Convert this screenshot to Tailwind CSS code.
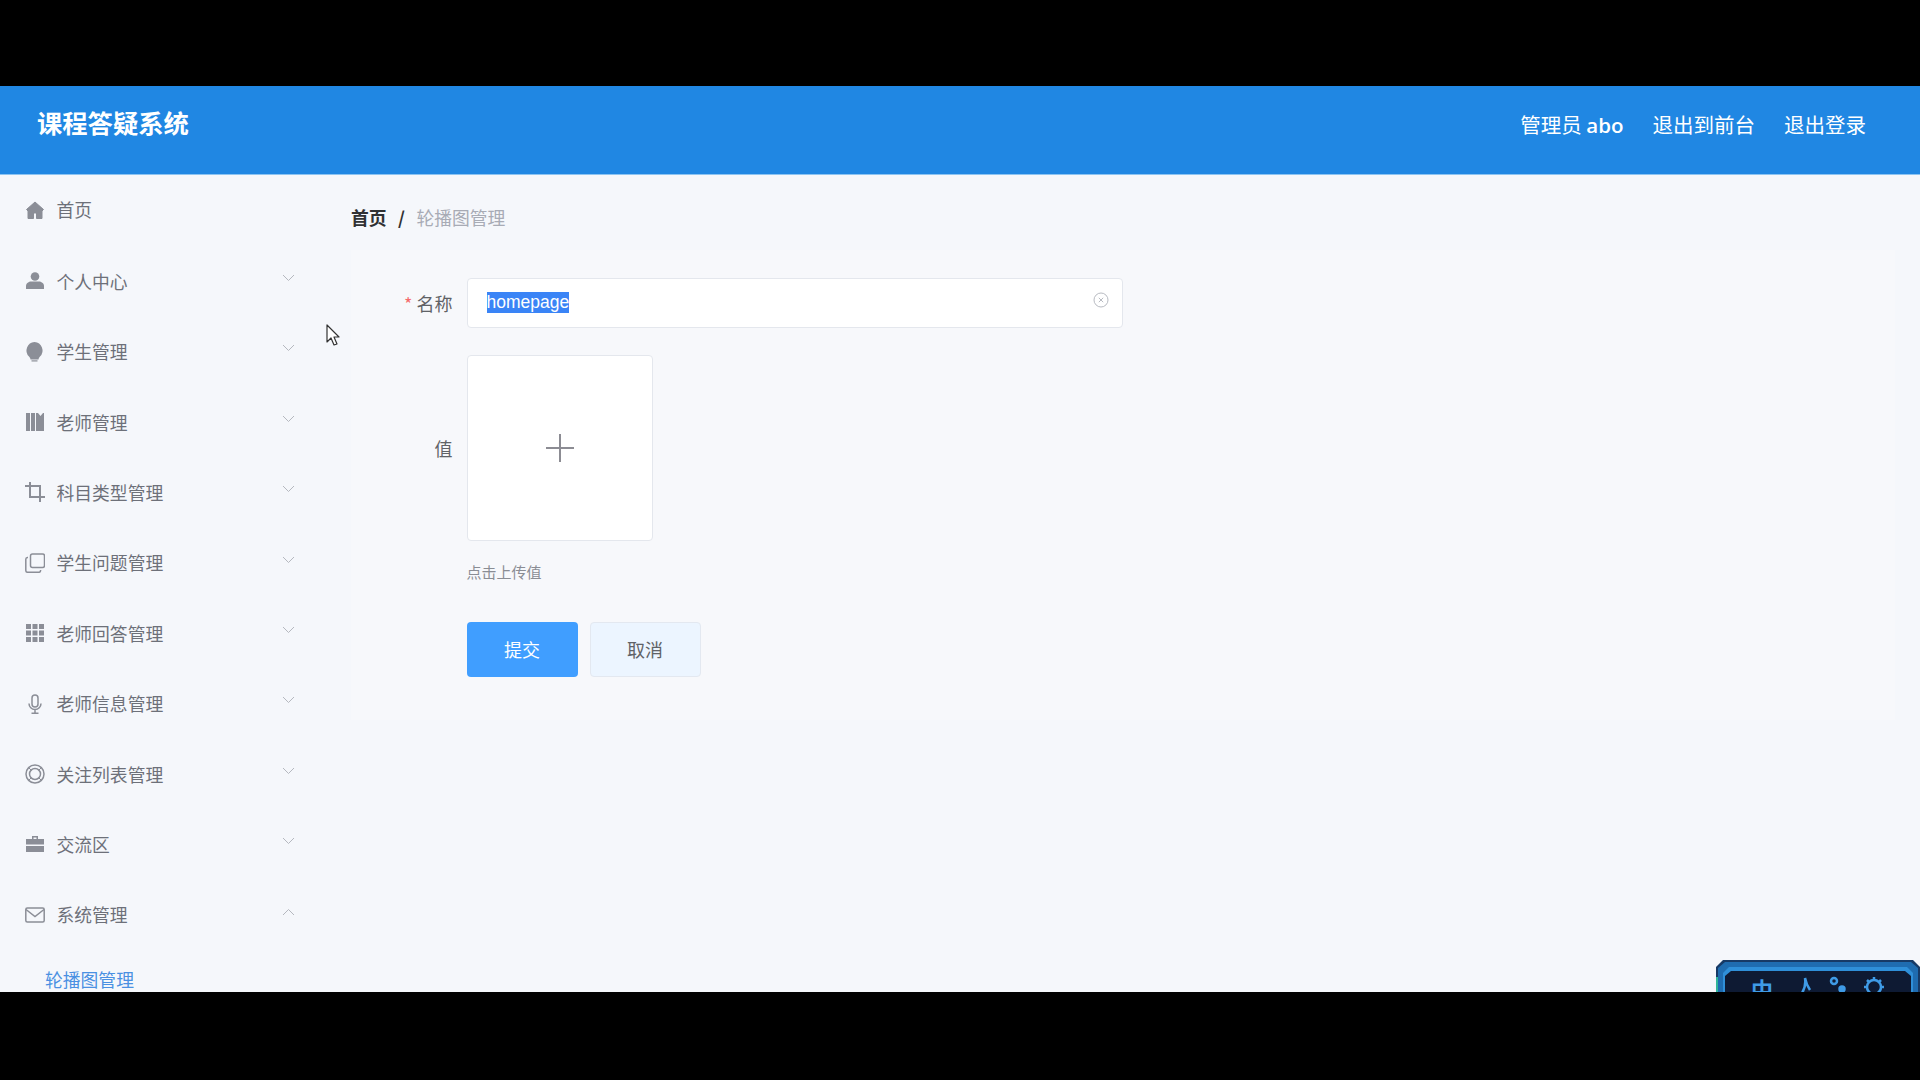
<!DOCTYPE html>
<html lang="zh"><head><meta charset="utf-8"><title>课程答疑系统</title>
<script src="https://cdn.jsdelivr.net/npm/@tailwindcss/browser@4"></script></head>
<body class="bg-black font-['Noto_Sans_CJK_SC','Noto_Sans',sans-serif]">
<div class="h-[1080px] w-[1920px] flex flex-col overflow-hidden">
<div class="h-[86px] shrink-0 bg-black"></div>
<div class="h-[906px] shrink-0 relative overflow-hidden bg-[#f5f7fb] flex flex-col">
  <header class="h-[89px] shrink-0 bg-[#2087e3] border-b border-[#8cc4f2] flex items-center justify-between pl-[37px] pr-[54px] text-white">
    <div class="text-[25.300px] font-bold leading-none -translate-y-[7px]">课程答疑系统</div>
    <div class="flex gap-[29px] text-[20.500px] leading-none -translate-y-[5px]"><span>管理员 <span class="font-['Open_Sans',sans-serif] font-semibold">abo</span></span><span>退出到前台</span><span>退出登录</span></div>
  </header>
  <div class="flex flex-1 min-h-0">
    <aside class="w-[320px] shrink-0 text-[17.800px] text-[#6d7079] overflow-hidden">
      <div class="h-[71px] flex items-center pl-[25px] gap-[11.500px] pb-[2px]">
        <svg class="w-5 h-5 text-[#8b8e97]" viewBox="0 0 20 20" fill="currentColor"><path d="M10 2 1.500 9.500 3 11v7.500h5.500V13h3v5.500H17V11l1.500-1.500z" stroke="currentColor" stroke-linejoin="round"/></svg><span>首页</span></div>
      <div class="h-[70.4px] flex items-center pl-[25px] gap-[11.500px] relative">
        <svg class="w-5 h-5 text-[#8b8e97]" viewBox="0 0 20 20" fill="currentColor"><circle cx="10" cy="5.500" r="4.300"/><path d="M1 18v-3c0-3 3-4.500 5-4.500h8c2 0 5 1.500 5 4.500v3z"/></svg><span>个人中心</span>
        <svg class="absolute left-[282px] top-[28px] w-[13px] h-[8px] text-[#b5b8bf]" viewBox="0 0 13 8" fill="none" stroke="currentColor"><path d="m1 1 5.500 5.500L12 1"/></svg></div>
      <div class="h-[70.4px] flex items-center pl-[25px] gap-[11.500px] relative">
        <svg class="w-5 h-5 text-[#8b8e97]" viewBox="0 0 20 20" fill="currentColor"><path d="M9.500 0a8.500 8.500 0 0 0-5.500 14.500c1 1 1.500 2 1.500 3h8c0-1 .5-2 1.500-3A8.500 8.500 0 0 0 9.500 0z"/><path d="M6.500 18.300h6v1.200h-6z"/></svg><span>学生管理</span>
        <svg class="absolute left-[282px] top-[28px] w-[13px] h-[8px] text-[#b5b8bf]" viewBox="0 0 13 8" fill="none" stroke="currentColor"><path d="m1 1 5.500 5.500L12 1"/></svg></div>
      <div class="h-[70.4px] flex items-center pl-[25px] gap-[11.500px] relative">
        <svg class="w-5 h-5 text-[#8b8e97]" viewBox="0 0 20 20" fill="currentColor"><path d="M1 1h4v18H1zM6 1h4v18H6zM11 1h2l2.500 3L18 1h1v18h-8z"/></svg><span>老师管理</span>
        <svg class="absolute left-[282px] top-[28px] w-[13px] h-[8px] text-[#b5b8bf]" viewBox="0 0 13 8" fill="none" stroke="currentColor"><path d="m1 1 5.500 5.500L12 1"/></svg></div>
      <div class="h-[70.4px] flex items-center pl-[25px] gap-[11.500px] relative">
        <svg class="w-5 h-5 text-[#8b8e97]" viewBox="0 0 20 20" fill="none" stroke="currentColor" stroke-width="2"><path d="M5 0v15h15M0 4h15v16"/></svg><span>科目类型管理</span>
        <svg class="absolute left-[282px] top-[28px] w-[13px] h-[8px] text-[#b5b8bf]" viewBox="0 0 13 8" fill="none" stroke="currentColor"><path d="m1 1 5.500 5.500L12 1"/></svg></div>
      <div class="h-[70.4px] flex items-center pl-[25px] gap-[11.500px] relative">
        <svg class="w-5 h-5 text-[#8b8e97]" viewBox="0 0 20 20" fill="none" stroke="currentColor" stroke-width="1.500"><rect x="5.500" y="1" width="14" height="13.500" rx="2"/><path d="M3 4.500h-.5A1.800 1.800 0 0 0 .8 6.300v11.200c0 1 .8 1.800 1.800 1.800h11.200c1 0 1.800-.8 1.800-1.800V17"/></svg><span>学生问题管理</span>
        <svg class="absolute left-[282px] top-[28px] w-[13px] h-[8px] text-[#b5b8bf]" viewBox="0 0 13 8" fill="none" stroke="currentColor"><path d="m1 1 5.500 5.500L12 1"/></svg></div>
      <div class="h-[70.4px] flex items-center pl-[25px] gap-[11.500px] relative">
        <svg class="w-5 h-5 text-[#8b8e97]" viewBox="0 0 20 20" fill="currentColor"><path d="M1 1h5v5H1zM7.500 1h5v5h-5zM14 1h5v5h-5zM1 7.500h5v5H1zM7.500 7.500h5v5h-5zM14 7.500h5v5h-5zM1 14h5v5H1zM7.500 14h5v5h-5zM14 14h5v5h-5z"/></svg><span>老师回答管理</span>
        <svg class="absolute left-[282px] top-[28px] w-[13px] h-[8px] text-[#b5b8bf]" viewBox="0 0 13 8" fill="none" stroke="currentColor"><path d="m1 1 5.500 5.500L12 1"/></svg></div>
      <div class="h-[70.4px] flex items-center pl-[25px] gap-[11.500px] relative">
        <svg class="w-5 h-5 text-[#8b8e97]" viewBox="0 0 20 20" fill="none" stroke="currentColor" stroke-width="1.500"><rect x="7" y="1" width="6" height="12" rx="3"/><path d="M4 9.500a6 6 0 0 0 12 0M10 15.500V19M6.500 19.200h7"/></svg><span>老师信息管理</span>
        <svg class="absolute left-[282px] top-[28px] w-[13px] h-[8px] text-[#b5b8bf]" viewBox="0 0 13 8" fill="none" stroke="currentColor"><path d="m1 1 5.500 5.500L12 1"/></svg></div>
      <div class="h-[70.4px] flex items-center pl-[25px] gap-[11.500px] relative">
        <svg class="w-5 h-5 text-[#8b8e97]" viewBox="0 0 20 20" fill="none" stroke="currentColor" stroke-width="1.500"><circle cx="10" cy="10" r="9"/><circle cx="10" cy="10" r="5.500"/><path d="M3.500 3.500l3 3M16.500 3.500l-3 3M3.500 16.500l3-3M16.500 16.500l-3-3" stroke-width="1"/></svg><span>关注列表管理</span>
        <svg class="absolute left-[282px] top-[28px] w-[13px] h-[8px] text-[#b5b8bf]" viewBox="0 0 13 8" fill="none" stroke="currentColor"><path d="m1 1 5.500 5.500L12 1"/></svg></div>
      <div class="h-[70.4px] flex items-center pl-[25px] gap-[11.500px] relative">
        <svg class="w-5 h-5 text-[#8b8e97]" viewBox="0 0 20 20" fill="currentColor"><path d="M7 2h6v3h-1.500V3.500h-3V5H7zM1 5h18v5.500H1zM1 12h18v6H1z"/></svg><span>交流区</span>
        <svg class="absolute left-[282px] top-[28px] w-[13px] h-[8px] text-[#b5b8bf]" viewBox="0 0 13 8" fill="none" stroke="currentColor"><path d="m1 1 5.500 5.500L12 1"/></svg></div>
      <div class="h-[70.4px] flex items-center pl-[25px] gap-[11.500px] relative">
        <svg class="w-5 h-5 text-[#8b8e97]" viewBox="0 0 20 20" fill="none" stroke="currentColor" stroke-width="1.500"><rect x=".8" y="3" width="18.400" height="14" rx="1.500"/><path d="m1 4.500 9 7 9-7"/></svg><span>系统管理</span>
        <svg class="absolute left-[282px] top-[28px] w-[13px] h-[8px] text-[#b5b8bf]" viewBox="0 0 13 8" fill="none" stroke="currentColor"><path d="m1 7 5.500-5.500L12 7"/></svg></div>
      <div class="pl-[45px] pt-[16px] text-[#4a90e2] leading-[26px]">轮播图管理</div>
    </aside>
    <main class="flex-1 min-w-0 pl-[31px] pr-[25px]">
      <nav class="h-[75px] flex items-center pt-[10px] text-[17.800px] leading-none">
        <span class="font-bold text-[#303133]">首页</span><span class="mx-[11.500px] font-bold text-[#303133]">/</span><span class="text-[#a8abb5]">轮播图管理</span>
      </nav>
      <form class="bg-[#f7f8fb] h-[470px] pt-[28px]">
        <div class="flex items-center h-[50px]">
          <label class="w-[115.500px] pr-[14px] text-right text-[18px] text-[#606266] leading-none"><span class="text-[#f56c6c] mr-[4px]">*</span>名称</label>
          <div class="relative w-[656px] h-[50px] bg-white border border-[#e4e7ed] rounded-[4px] flex items-center pl-[19px] text-[17.500px] text-white leading-[25px]">
            <span class="bg-[#3a84f6] h-[21px] mt-[-2px] flex items-center font-['Liberation_Sans',sans-serif]">homepage</span>
            <svg class="absolute right-[13px] top-[13px] w-[16px] h-[16px] text-[#b8bbc2]" viewBox="0 0 16 16" fill="none" stroke="currentColor"><circle cx="8" cy="8" r="7"/><path d="m5.800 5.800 4.400 4.400M10.200 5.800l-4.400 4.400"/></svg>
          </div>
        </div>
        <div class="flex items-center mt-[27px] h-[186px]">
          <label class="w-[115.500px] pr-[14px] text-right text-[18px] text-[#606266] leading-none">值</label>
          <div class="w-[186px] h-[186px] bg-white border border-[#e4e7ed] rounded-[4px] flex items-center justify-center">
            <svg class="w-[30px] h-[30px] text-[#8c8c93]" viewBox="0 0 30 30" fill="none" stroke="currentColor" stroke-width="2"><path d="M15 1v28M1 15h28"/></svg>
          </div>
        </div>
        <div class="pl-[115.500px] mt-[20px] text-[15px] text-[#8a8d94] leading-[21px]">点击上传值</div>
        <div class="pl-[115.500px] mt-[40px] flex gap-[12px] text-[18px] leading-none">
          <button type="button" class="w-[111px] h-[55px] rounded-[4px] bg-[#409eff] text-white pb-[2px]">提交</button>
          <button type="button" class="w-[111px] h-[55px] rounded-[4px] bg-[#ecf5ff] border border-[#e3e8f0] text-[#606266] pb-[2px]">取消</button>
        </div>
      </form>
    </main>
  </div>
  <svg class="absolute left-[326px] top-[238px] w-[14px] h-[22px]" viewBox="0 0 14 22"><path d="M1 1v17l4-4 3 7 3-1-3-7h5z" fill="#fff" stroke="#333" stroke-width="1.200" stroke-linejoin="round"/></svg>
  <div class="absolute left-[1716px] top-[873px] w-[204px] h-[40px]">
    <svg class="absolute inset-0 w-full h-full" viewBox="0 0 204 40">
      <path d="M0 40V8l7-7h190l7 7v32z" fill="#173a66"/>
      <path d="M2 40V9l7-6h186l7 6v31z" fill="#1f6cb0"/>
      <path d="M7 40V14l6-6h178l6 6v26z" fill="#2f8fd8"/>
      <path d="M9 40V17l6-5h174l6 5v23z" fill="#0e1a33"/>
      <path d="M0 18h2v22H0z" fill="#2fb59a"/>
      <g fill="none" stroke="#3f9be6" stroke-width="2.500">
        <path d="M86 34c2-3 4-8 3-15 1 5 3 9 5 12"/>
        <circle cx="118" cy="22" r="3"/>
        <circle cx="126" cy="30" r="2.500" fill="#3f9be6"/>
        <circle cx="158" cy="28" r="7"/>
        <path d="M158 18v3M151 21l2 2M165 21l-2 2M148 28h3M168 28h-3"/>
      </g>
    </svg>
    <span class="absolute left-[35px] top-[18px] text-[#3f9be6] text-[22px] leading-none font-bold">中</span>
  </div>
</div>
<div class="h-[88px] shrink-0 bg-black"></div>
</div>
</body></html>
